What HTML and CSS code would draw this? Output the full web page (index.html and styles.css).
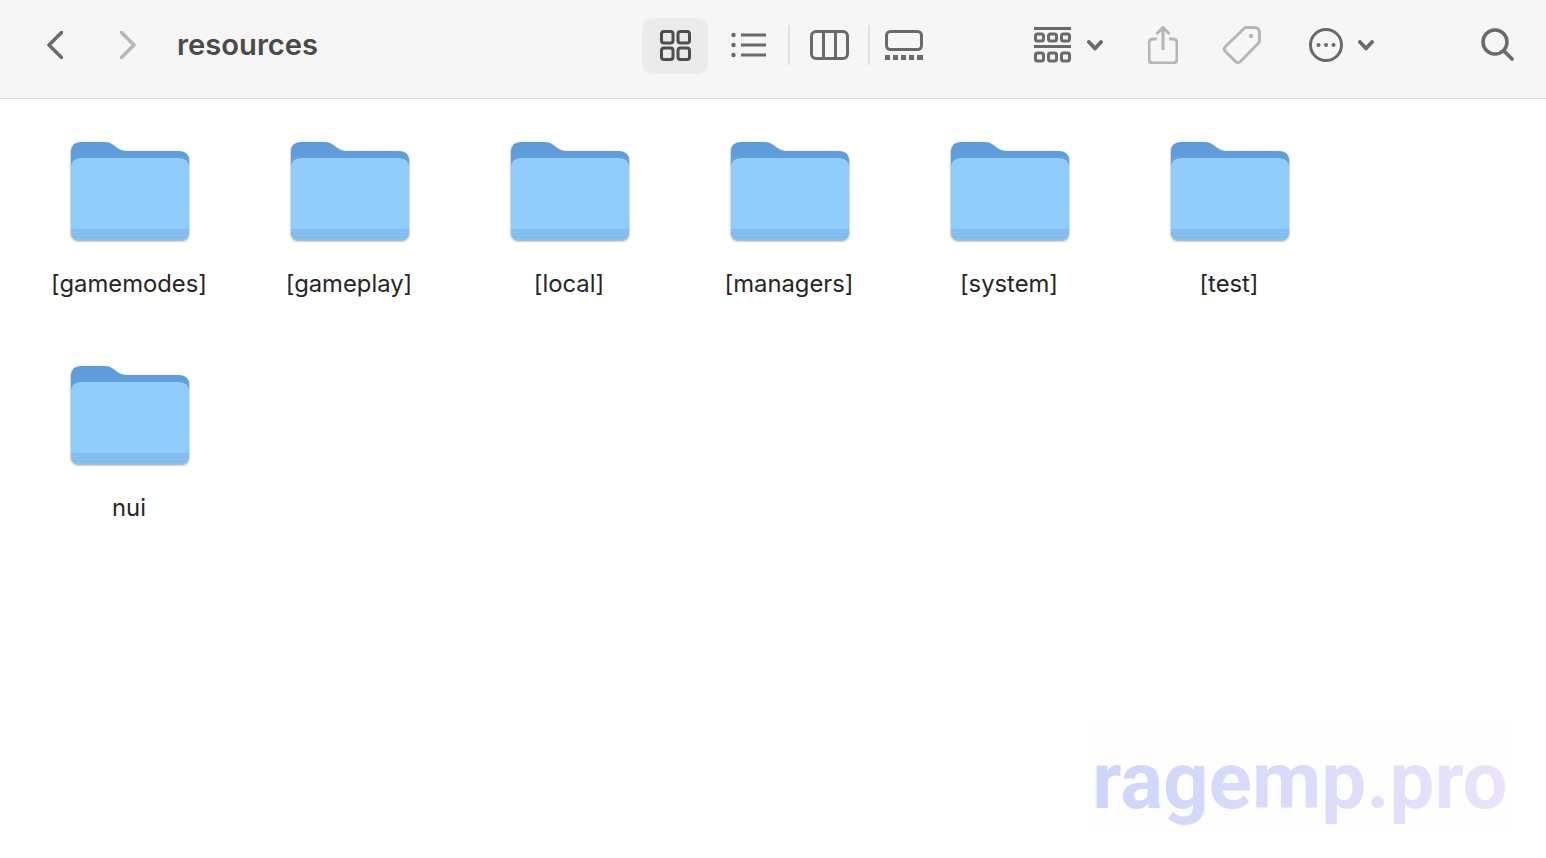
FILE: index.html
```html
<!DOCTYPE html>
<html lang="en">
<head>
    <meta charset="UTF-8">
    <title>resources</title>
    <link rel="stylesheet" href="styles.css">
</head>
<body>
<svg class="defs" width="0" height="0">
    <defs>
        <linearGradient id="folderBack" x1="0" y1="0" x2="0" y2="1">
            <stop offset="0" stop-color="#5b9ad8"/>
            <stop offset="0.2" stop-color="#629fdc"/>
            <stop offset="1" stop-color="#6cabe6"/>
        </linearGradient>
        <filter id="folderShadow" x="-5%" y="-5%" width="110%" height="112%">
            <feDropShadow dx="0" dy="1" stdDeviation="0.8" flood-color="#3a4a5a" flood-opacity="0.6"/>
        </filter>
        <symbol id="folder" viewBox="0 0 122 106">
            <g filter="url(#folderShadow)">
                <path d="M3 13q0-10 10-10h22c5 0 8 1 11 3.500c4 3 7 5.500 13 5.500h52q10 0 10 10v70q0 9-9 9H12q-9 0-9-9z" fill="url(#folderBack)"/>
                <path d="M3 29q0-10 10-10h98q10 0 10 10v63q0 9-9 9H12q-9 0-9-9z" fill="#90cdfb"/>
                <path d="M3 90h118v2q0 9-9 9H12q-9 0-9-9z" fill="#85c0f2"/>
                <path d="M3 90.500h118M3.500 94.500h117M4.500 98h115" stroke="#78b4e8" stroke-width="0.8" fill="none"/>
            </g>
        </symbol>
    </defs>
</svg>

<header class="toolbar">
    <svg class="icon back" width="16" height="28" viewBox="0 0 16 28"><path d="M14.500 1.500 2 14l12.500 12.500" class="line thick"/></svg>
    <svg class="icon forward" width="16" height="28" viewBox="0 0 16 28"><path d="M1.500 1.500 14 14 1.500 26.500" class="line thick dim"/></svg>
    <h1 class="title">resources</h1>

    <div class="view-active">
        <svg width="31" height="31" viewBox="0 0 31 31">
            <g class="line dark">
                <rect x="1.500" y="1.500" width="11.500" height="11.500" rx="2.500"/>
                <rect x="18" y="1.500" width="11.500" height="11.500" rx="2.500"/>
                <rect x="1.500" y="18" width="11.500" height="11.500" rx="2.500"/>
                <rect x="18" y="18" width="11.500" height="11.500" rx="2.500"/>
            </g>
        </svg>
    </div>
    <svg class="icon list" width="36" height="26" viewBox="0 0 36 26">
        <circle cx="2.500" cy="3" r="2.200" class="solid"/>
        <circle cx="2.500" cy="13" r="2.200" class="solid"/>
        <circle cx="2.500" cy="23" r="2.200" class="solid"/>
        <path d="M10 3h25M10 13h25M10 23h25" class="line"/>
    </svg>
    <span class="sep sep-first"></span>
    <svg class="icon columns" width="39" height="30" viewBox="0 0 39 30">
        <rect x="1.500" y="1.500" width="36" height="27" rx="4.500" class="line"/>
        <path d="M13.500 2v26M25.500 2v26" class="line"/>
    </svg>
    <span class="sep sep-second"></span>
    <svg class="icon gallery" width="38" height="30" viewBox="0 0 38 30">
        <rect x="1.500" y="1.500" width="35" height="18" rx="4" class="line"/>
        <path d="M0 25h5v5H0zM8 25h5v5H8zM16 25h5v5h-5zM24 25h5v5h-5zM32 25h6v5h-6z" class="solid"/>
    </svg>

    <svg class="icon group" width="37" height="36" viewBox="0 0 37 36">
        <path d="M0 1.500h37M0 19.500h37" class="line"/>
        <g class="line">
            <rect x="1.500" y="7" width="8" height="7" rx="2"/>
            <rect x="14.500" y="7" width="8" height="7" rx="2"/>
            <rect x="27.500" y="7" width="8" height="7" rx="2"/>
            <rect x="1.500" y="26" width="8" height="8" rx="2"/>
            <rect x="14.500" y="26" width="8" height="8" rx="2"/>
            <rect x="27.500" y="26" width="8" height="8" rx="2"/>
        </g>
    </svg>
    <svg class="icon chevron group-chevron" width="17" height="11" viewBox="0 0 17 11"><path d="M2 2l6 6.500L14 2" class="line bold"/></svg>
    <svg class="icon share" width="30" height="38" viewBox="0 0 30 38">
        <path d="M9 13H5q-4 0-4 4v16q0 4 4 4h20q4 0 4-4V17q0-4-4-4h-4" class="line dim"/>
        <path d="M15 24V2M8.500 8 15 1.500 21.500 8" class="line dim"/>
    </svg>
    <svg class="icon tag" width="39" height="39" viewBox="0 0 39 39">
        <path d="M22 2.500q1-1 2.500-1H32q5.500 0 5.500 5.500v7.500q0 1.500-1 2.500L18.500 35.500q-2.500 2.500-5 0l-10-10q-2.500-2.500 0-5z" class="line dim"/>
        <circle cx="29" cy="10" r="2.200" class="solid dim"/>
    </svg>
    <svg class="icon more" width="34" height="34" viewBox="0 0 34 34">
        <circle cx="17" cy="17" r="15.500" class="line"/>
        <circle cx="9.500" cy="17" r="2" class="solid"/>
        <circle cx="17" cy="17" r="2" class="solid"/>
        <circle cx="24.500" cy="17" r="2" class="solid"/>
    </svg>
    <svg class="icon chevron more-chevron" width="17" height="11" viewBox="0 0 17 11"><path d="M2 2l6 6.500L14 2" class="line bold"/></svg>
    <svg class="icon search" width="34" height="34" viewBox="0 0 34 34">
        <circle cx="14" cy="14" r="12" class="line thick"/>
        <path d="M23 23l8 8" class="line bold"/>
    </svg>
</header>

<main class="files">
    <div class="file">
        <svg class="folder" width="122" height="106"><use href="#folder"/></svg>
        <span class="file-name">[gamemodes]</span>
    </div>
    <div class="file">
        <svg class="folder" width="122" height="106"><use href="#folder"/></svg>
        <span class="file-name">[gameplay]</span>
    </div>
    <div class="file">
        <svg class="folder" width="122" height="106"><use href="#folder"/></svg>
        <span class="file-name">[local]</span>
    </div>
    <div class="file">
        <svg class="folder" width="122" height="106"><use href="#folder"/></svg>
        <span class="file-name">[managers]</span>
    </div>
    <div class="file">
        <svg class="folder" width="122" height="106"><use href="#folder"/></svg>
        <span class="file-name">[system]</span>
    </div>
    <div class="file">
        <svg class="folder" width="122" height="106"><use href="#folder"/></svg>
        <span class="file-name">[test]</span>
    </div>
    <div class="file">
        <svg class="folder" width="122" height="106"><use href="#folder"/></svg>
        <span class="file-name">nui</span>
    </div>
</main>

<div class="watermark"><span class="watermark-text">ragemp.pro</span></div>
</body>
</html>
```

FILE: styles.css
```css
html, body {
    height: 100%;
}

body {
    margin: 0;
    background: #fff;
    font-family: Inter, "Liberation Sans", sans-serif;
    overflow: hidden;
}

.defs {
    position: absolute;
}

.toolbar {
    display: flex;
    align-items: center;
    box-sizing: border-box;
    height: 99px;
    padding-left: 47px;
    padding-bottom: 8px;
    background: #f6f6f6;
    border-bottom: 1px solid #d9d9d9;
}

.icon {
    flex: none;
}

.line {
    fill: none;
    stroke: #6a6a6a;
    stroke-width: 3;
}

.line * {
    stroke-width: 3;
}

.line.thick {
    stroke-width: 3.500;
    stroke-linecap: round;
    stroke-linejoin: round;
}

.line.bold {
    stroke-width: 3.800;
    stroke-linecap: round;
    stroke-linejoin: round;
}

.line.dark {
    stroke: #4e4e4e;
}

.line.dim {
    stroke: #b6b6b6;
}

.solid {
    fill: #6a6a6a;
}

.solid.dim {
    fill: #b6b6b6;
}

.forward {
    margin-left: 57px;
}

.title {
    margin: 0 0 0 41px;
    width: 141px;
    font-size: 29.200px;
    font-weight: 600;
    line-height: 36px;
    color: #4a4a4a;
    white-space: nowrap;
}

.view-active {
    display: flex;
    align-items: center;
    justify-content: center;
    flex: none;
    box-sizing: border-box;
    width: 66px;
    height: 56px;
    margin: 2px 0 0 324px;
    padding-bottom: 2px;
    border-radius: 11px;
    background: #ebebeb;
}

.list {
    margin-left: 23px;
}

.sep {
    flex: none;
    width: 2px;
    height: 40px;
    background: #e2e2e2;
}

.sep-first {
    margin-left: 21px;
}

.columns {
    margin-left: 20px;
}

.sep-second {
    margin-left: 19px;
}

.gallery {
    margin-left: 15px;
}

.group {
    margin-left: 111px;
}

.group-chevron {
    margin-left: 16px;
}

.share {
    margin-left: 44px;
}

.tag {
    margin-left: 44px;
}

.more {
    margin-left: 48px;
}

.more-chevron {
    margin-left: 15px;
}

.search {
    margin-left: 106px;
}

.files {
    display: grid;
    grid-template-columns: repeat(6, 220px);
    grid-auto-rows: 224px;
    padding: 40px 0 0 19px;
}

.file {
    display: flex;
    flex-direction: column;
    align-items: center;
}

.folder {
    flex: none;
}

.file-name {
    margin-top: 23px;
    font-size: 23.800px;
    line-height: 32px;
    color: #262626;
    white-space: nowrap;
}

.watermark {
    position: absolute;
    left: 1088px;
    top: 720px;
    display: flex;
    align-items: flex-end;
    justify-content: center;
    box-sizing: border-box;
    width: 424px;
    height: 115px;
    padding-bottom: 6px;
    background: #fefefe;
}

.watermark-text {
    font-family: Roboto, "Liberation Sans", sans-serif;
    font-size: 80px;
    font-weight: 700;
    line-height: 96px;
    background: linear-gradient(90deg, #cdd6fb, #dcdcfb 55%, #ece3fb);
    -webkit-background-clip: text;
    background-clip: text;
    color: transparent;
}
```
